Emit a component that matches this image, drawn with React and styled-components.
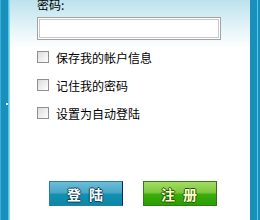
import React, { useState } from "react";
import styled, { createGlobalStyle } from "styled-components";

const GlobalStyle = createGlobalStyle`
  html, body { margin: 0; padding: 0; }
  body {
    width: 260px;
    height: 220px;
    overflow: hidden;
    font-family: "Noto Sans CJK SC", "Liberation Sans", sans-serif;
  }
`;

const Frame = styled.div`
  width: 260px;
  height: 220px;
  display: flex;
  overflow: hidden;
`;

const LeftBar = styled.div`
  width: 10px;
  flex-shrink: 0;
  display: flex;
  flex-direction: column;
  justify-content: center;
  align-items: flex-start;
  background: linear-gradient(to right,
    #3aaed6 0, #3aaed6 1px,
    #1890bb 1px, #1890bb 8px,
    #55c4e8 8px, #55c4e8 9px,
    #8fd6ef 9px);
`;

const Dot = styled.div`
  width: 2px;
  height: 2px;
  margin: 0 0 12px 6px;
  background: #ffffff;
`;

const RightBar = styled.div`
  width: 10px;
  flex-shrink: 0;
  background: linear-gradient(to right,
    #1890bb 0, #1890bb 7px,
    #55c8ec 7px, #55c8ec 8px,
    #1890bb 8px);
`;

const Main = styled.div`
  flex: 1;
  display: flex;
  flex-direction: column;
  padding-left: 27px;
  background: linear-gradient(to bottom, #bde2ee 0, #e4f4f9 28px, #ffffff 48px, #ffffff 100%);
`;

const Label = styled.div`
  margin-top: -2px;
  height: 19px;
  font-size: 12px;
  line-height: 14px;
  color: #000;
`;

const Field = styled.input`
  box-sizing: border-box;
  width: 184px;
  height: 23px;
  margin: 0;
  padding: 0 4px;
  border: 1px solid #a3a3a3;
  box-shadow: inset 0 0 0 1px #ffffff, inset 0 0 0 2px #c8c8c8;
  background: #ffffff;
  outline: none;
  font-size: 12px;
`;

const Options = styled.div`
  display: flex;
  flex-direction: column;
  margin-top: 3px;
`;

const Row = styled.label`
  display: flex;
  align-items: center;
  gap: 7px;
  height: 28px;
  font-size: 12px;
  color: #000;
  cursor: pointer;
`;

const Box = styled.span`
  box-sizing: border-box;
  width: 12px;
  height: 12px;
  border: 1px solid #8e8f8f;
  background: linear-gradient(135deg, #dcdcdc, #ffffff);
  font-size: 10px;
  line-height: 10px;
  text-align: center;
`;

const Buttons = styled.div`
  display: flex;
  gap: 20px;
  margin-top: auto;
  margin-bottom: 14px;
  padding-left: 12px;
`;

const Button = styled.button`
  box-sizing: border-box;
  width: 74px;
  height: 25px;
  padding: 0 0 0 6px;
  font-family: "Noto Sans CJK SC", sans-serif;
  font-size: 14px;
  font-weight: 700;
  letter-spacing: 8px;
  cursor: pointer;
  color: ${p => (p.$green ? "#ffffc8" : "#ffffff")};
  border: 1px solid ${p => (p.$green ? "#2f7d15" : "#2c7ea0")};
  border-right-color: ${p => (p.$green ? "#3a6a20" : "#0a1f80")};
  background: ${p =>
    p.$green
      ? "linear-gradient(to bottom, #a6dc62 0%, #7cc93e 45%, #3aab0a 55%, #2aa000 100%)"
      : "linear-gradient(to bottom, #6cbdd8 0%, #4aa8c8 45%, #138fb0 55%, #0b87a8 100%)"};
  text-shadow: ${p => {
    const c = p.$green ? "#1d5a08" : "#0a4058";
    return `1px 0 0 ${c}, -1px 0 0 ${c}, 0 1px 0 ${c}, 0 -1px 0 ${c}`;
  }};
`;

const options = ["保存我的帐户信息", "记住我的密码", "设置为自动登陆"];

export default function App() {
  const [checked, setChecked] = useState([false, false, false]);
  const [pwd, setPwd] = useState("");

  const toggle = i => setChecked(c => c.map((v, j) => (j === i ? !v : v)));

  return (
    <Frame>
      <GlobalStyle />
      <LeftBar>
        <Dot />
      </LeftBar>
      <Main>
        <Label>密码:</Label>
        <Field type="password" value={pwd} onChange={e => setPwd(e.target.value)} />
        <Options>
          {options.map((t, i) => (
            <Row key={t} onClick={() => toggle(i)}>
              <Box>{checked[i] ? "✓" : ""}</Box>
              {t}
            </Row>
          ))}
        </Options>
        <Buttons>
          <Button>登陆</Button>
          <Button $green>注册</Button>
        </Buttons>
      </Main>
      <RightBar />
    </Frame>
  );
}
